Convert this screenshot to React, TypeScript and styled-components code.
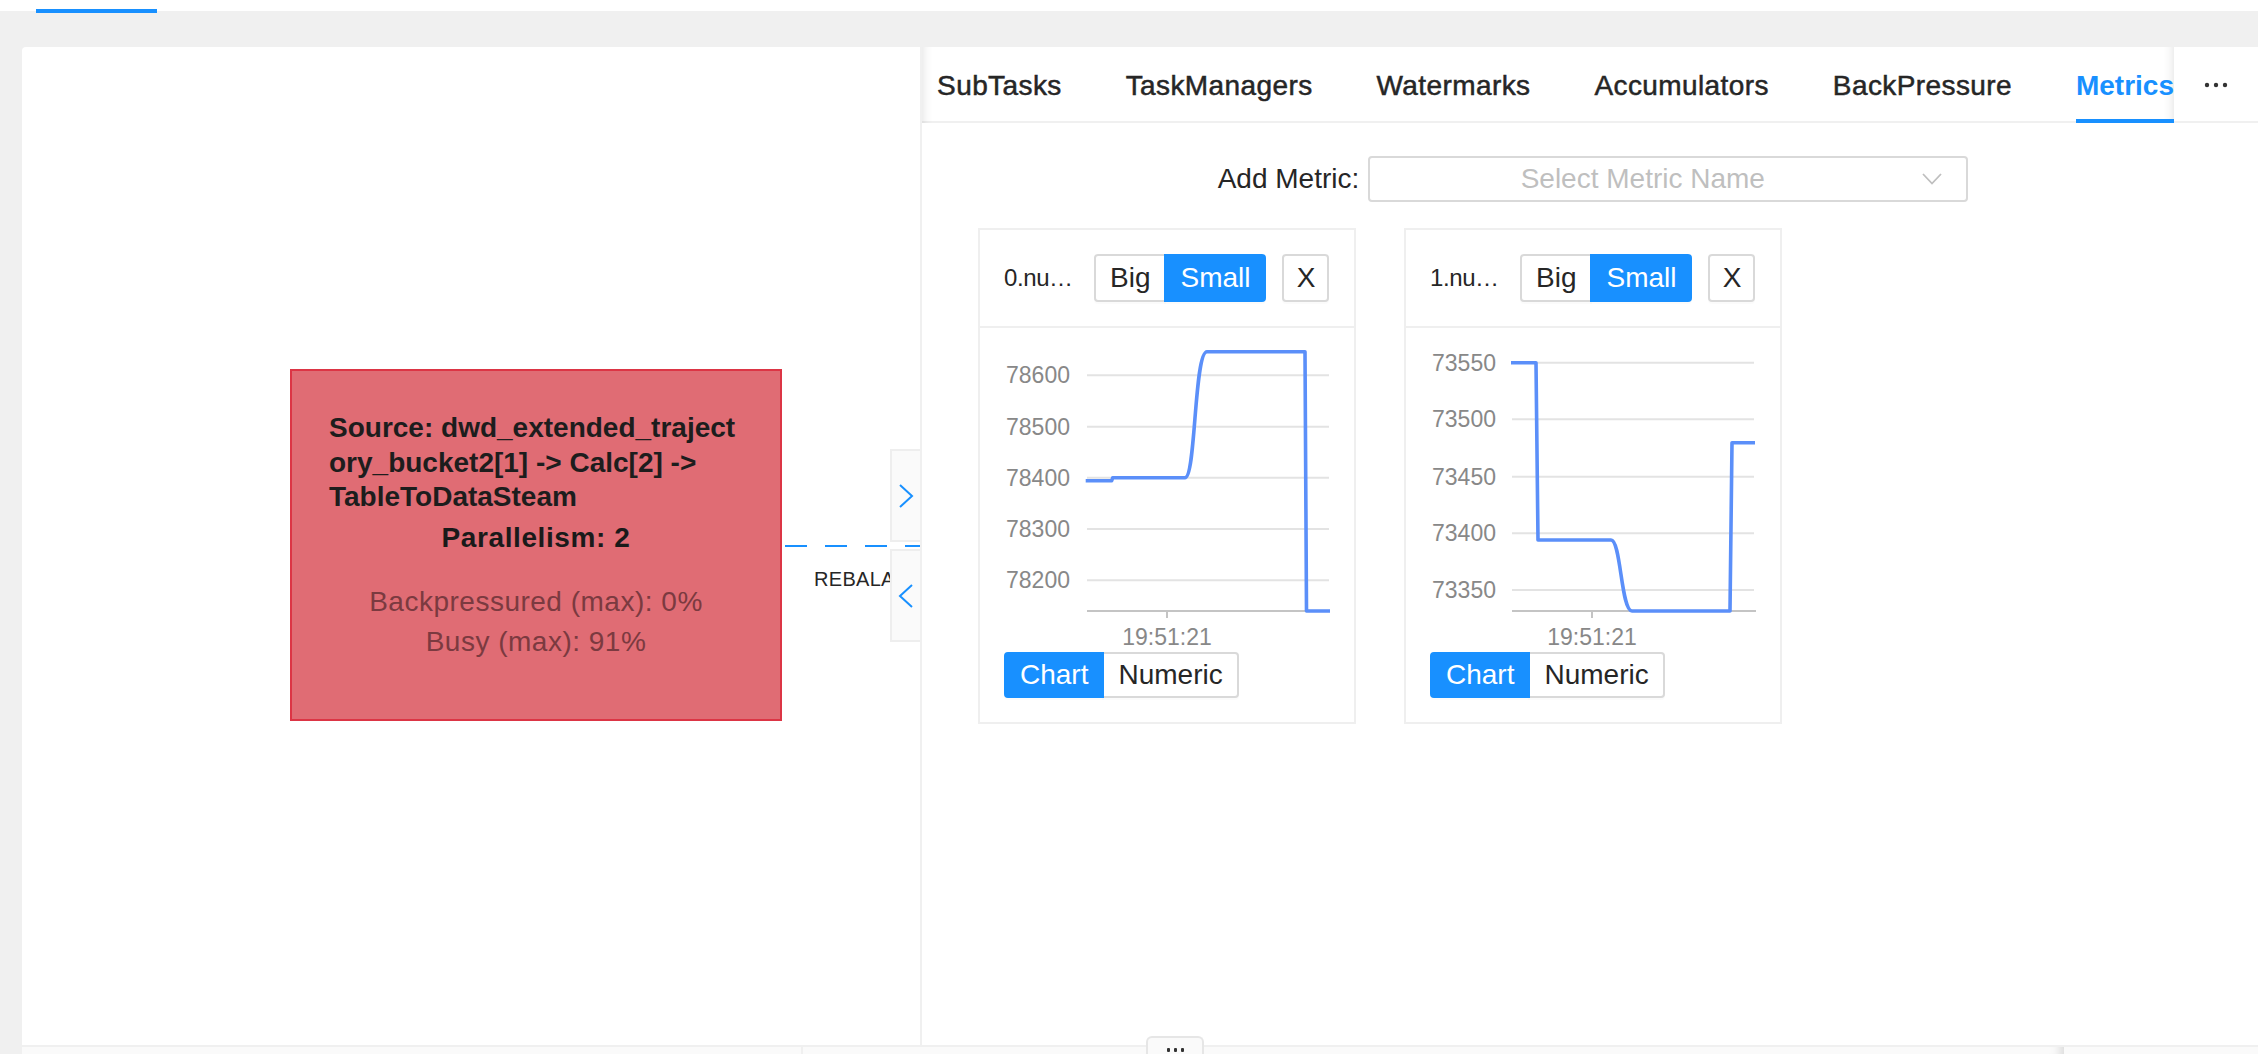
import React from "react";
import styled, { createGlobalStyle } from "styled-components";

const GlobalStyle = createGlobalStyle`
  html, body { margin: 0; padding: 0; height: 100%; overflow: hidden; background: #f0f0f0; }
  body { font-family: "Liberation Sans", Arial, Helvetica, sans-serif; color: #262626; }
  #root { height: 100%; }
  * { box-sizing: border-box; }
`;

const Page = styled.div`
  height: 100vh;
  display: flex;
  flex-direction: column;
  overflow: hidden;
`;

const TopStrip = styled.div`
  height: 11px;
  flex-shrink: 0;
  background: #fff;
  display: flex;
  padding-left: 36px;
  position: relative;
  z-index: 1;
`;

const TopInk = styled.div`
  width: 121px;
  height: 4px;
  margin-top: 9px;
  background: #1890ff;
`;

const Workspace = styled.div`
  flex: 1;
  min-height: 0;
  display: flex;
  flex-direction: column;
  padding: 36px 0 0 22px;
`;

const Card = styled.div`
  height: 998px;
  flex-shrink: 0;
  background: #fff;
  border-radius: 4px 0 0 0;
  display: flex;
  overflow: hidden;
`;

/* ---------- Left: job graph ---------- */

const GraphPanel = styled.div`
  width: 898px;
  flex-shrink: 0;
  position: relative;
  overflow: hidden;
`;

const Node = styled.div<{ $x: number; $y: number }>`
  position: absolute;
  left: ${(p) => p.$x}px;
  top: ${(p) => p.$y}px;
  width: 492px;
  height: 352px;
  background: #e06c74;
  border: 2px solid #dc3545;
  padding-top: 40px;
  display: flex;
  flex-direction: column;
`;

const NodeName = styled.div`
  display: flex;
  flex-direction: column;
  align-items: flex-start;
  padding-left: 37px;
  font-size: 28px;
  font-weight: 700;
  line-height: 34.5px;
  color: #1d1d1d;
  white-space: nowrap;
`;

const Parallelism = styled.div`
  margin-top: 6px;
  text-align: center;
  font-size: 28px;
  font-weight: 700;
  letter-spacing: 0.6px;
  line-height: 34px;
  color: #1a1a1a;
`;

const NodeStat = styled.div<{ $first?: boolean }>`
  margin-top: ${(p) => (p.$first ? 27 : 0)}px;
  text-align: center;
  font-size: 28px;
  line-height: 40px;
  letter-spacing: 0.5px;
  color: #7b3a40;
`;

const EdgeSvg = styled.svg`
  position: absolute;
  left: 760px;
  top: 493px;
`;

const EdgeLabel = styled.div`
  position: absolute;
  left: 792px;
  top: 520px;
  font-size: 20px;
  line-height: 24px;
  letter-spacing: 0.3px;
  color: #262626;
  white-space: nowrap;
`;

const ToggleStack = styled.div`
  position: absolute;
  right: 0;
  top: 402px;
  display: flex;
  flex-direction: column;
  gap: 7px;
  z-index: 2;
`;

const ToggleButton = styled.div`
  width: 30px;
  height: 93px;
  background: #fafafa;
  border: 2px solid #eeeeee;
  border-right: none;
  display: flex;
  align-items: center;
  justify-content: center;
`;

/* ---------- Right: tabs + metrics ---------- */

const DetailPanel = styled.div`
  flex: 1;
  min-width: 0;
  border-left: 2px solid #f0f0f0;
  display: flex;
  flex-direction: column;
`;

const TabBar = styled.div`
  height: 76px;
  flex-shrink: 0;
  display: flex;
  box-shadow: inset 0 -2px 0 #f0f0f0;
`;

const TabList = styled.div`
  flex: 1;
  min-width: 0;
  display: flex;
  justify-content: flex-end;
  gap: 64px;
  overflow: hidden;
  box-shadow: inset 12px 0 10px -10px rgba(0, 0, 0, 0.1),
    inset -12px 0 10px -10px rgba(0, 0, 0, 0.1);
`;

const Tab = styled.div<{ $active?: boolean }>`
  flex-shrink: 0;
  height: 76px;
  padding-top: 6px;
  display: flex;
  align-items: center;
  white-space: nowrap;
  font-size: 28px;
  font-weight: ${(p) => (p.$active ? 700 : 400)};
  letter-spacing: ${(p) => (p.$active ? "0" : "0.4px")};
  -webkit-text-stroke: ${(p) => (p.$active ? "0" : "0.5px")} currentColor;
  color: ${(p) => (p.$active ? "#1890ff" : "#262626")};
  border-bottom: 4px solid ${(p) => (p.$active ? "#1890ff" : "transparent")};
`;

const MoreTab = styled.div`
  width: 84px;
  flex-shrink: 0;
  display: flex;
  align-items: center;
  justify-content: center;
`;

const MetricRow = styled.div`
  margin-top: 33px;
  display: flex;
  justify-content: center;
  align-items: center;
  gap: 9px;
  padding-left: 6px;
`;

const FieldLabel = styled.span`
  font-size: 28px;
  color: #262626;
`;

const Select = styled.div`
  width: 600px;
  height: 46px;
  border: 2px solid #d9d9d9;
  border-radius: 4px;
  display: flex;
  align-items: center;
  padding: 0 22px;
`;

const Placeholder = styled.span`
  flex: 1;
  text-align: center;
  font-size: 28px;
  color: #bfbfbf;
  white-space: nowrap;
`;

const ArrowBox = styled.span`
  width: 51px;
  display: flex;
  justify-content: flex-end;
  padding-right: 2px;
`;

const CardRow = styled.div`
  margin-top: 26px;
  padding-left: 56px;
  display: flex;
  gap: 48px;
`;

const MetricCard = styled.div`
  width: 378px;
  border: 2px solid #efefef;
  display: flex;
  flex-direction: column;
`;

const CardHead = styled.div`
  height: 98px;
  border-bottom: 2px solid #efefef;
  display: flex;
  align-items: center;
  padding: 0 24px;
`;

const CardTitle = styled.span`
  width: 66px;
  margin-right: 24px;
  font-size: 24px;
  letter-spacing: -0.4px;
  white-space: nowrap;
  color: #262626;
`;

const ButtonGroup = styled.div`
  display: flex;
`;

const SegButton = styled.div<{ $active?: boolean; $pos: "first" | "last"; $h: number }>`
  height: ${(p) => p.$h}px;
  padding: 0 14px;
  display: flex;
  align-items: center;
  font-size: 28px;
  white-space: nowrap;
  color: ${(p) => (p.$active ? "#fff" : "#262626")};
  background: ${(p) => (p.$active ? "#1890ff" : "#fff")};
  border: 2px solid ${(p) => (p.$active ? "#1890ff" : "#d9d9d9")};
  border-radius: ${(p) => (p.$pos === "first" ? "4px 0 0 4px" : "0 4px 4px 0")};
  margin-left: ${(p) => (p.$pos === "last" ? "-2px" : "0")};
  position: relative;
  z-index: ${(p) => (p.$active ? 1 : 0)};
  box-shadow: 0 2px 0 rgba(0, 0, 0, 0.016);
`;

const CloseButton = styled.div`
  margin-left: 16px;
  width: 47px;
  height: 48px;
  border: 2px solid #d9d9d9;
  border-radius: 4px;
  display: flex;
  align-items: center;
  justify-content: center;
  font-size: 28px;
  color: #262626;
  box-shadow: 0 2px 0 rgba(0, 0, 0, 0.016);
`;

const CardBody = styled.div`
  padding: 12px 24px 24px;
  display: flex;
  flex-direction: column;
`;

const ChartSvg = styled.svg`
  display: block;
  font-family: "Liberation Sans", Arial, sans-serif;
`;

const ViewToggle = styled.div`
  margin-top: 4px;
  display: flex;
`;

/* ---------- Bottom ---------- */

const BottomBar = styled.div`
  flex: 1;
  position: relative;
  z-index: 3;
  background: #fafafa;
  border-top: 2px solid #f0f0f0;
  display: flex;
`;

const BottomCell = styled.div<{ $w?: number; $shadow?: boolean; $divider?: boolean }>`
  ${(p) => (p.$w ? `width: ${p.$w}px; flex-shrink: 0;` : "flex: 1;")}
  border-right: ${(p) => (p.$divider ? "2px solid #f0f0f0" : "none")};
  box-shadow: ${(p) => (p.$shadow ? "inset -12px 0 10px -8px rgba(0,0,0,0.12)" : "none")};
`;

const DragHandle = styled.div`
  position: absolute;
  left: 1124px;
  top: -11px;
  width: 58px;
  height: 30px;
  background: #fafafa;
  border: 2px solid #e6e6e6;
  border-bottom: none;
  border-radius: 6px 6px 0 0;
  display: flex;
  justify-content: center;
  gap: 4px;
  padding-top: 10px;
`;

const HandleDot = styled.span`
  width: 3px;
  height: 4px;
  border-radius: 1px;
  background: #333;
`;

/* ---------- Data ---------- */

type Tick = { label: string; y: number };
type ChartSpec = {
  title: string;
  ticks: Tick[];
  gridX1: number;
  gridX2: number;
  tickX: number;
  path: string;
};

const charts: ChartSpec[] = [
  {
    title: "0.nu\u2026",
    ticks: [
      { label: "78600", y: 35.3 },
      { label: "78500", y: 86.7 },
      { label: "78400", y: 137.7 },
      { label: "78300", y: 189 },
      { label: "78200", y: 240.3 },
    ],
    gridX1: 83,
    gridX2: 325,
    tickX: 163,
    path: "M81.7 140.7 L107.7 140.7 L108.7 137.7 L181 137.7 C192 137.7 190 11.7 203 11.7 L301 11.7 L302.5 271 L326 271",
  },
  {
    title: "1.nu\u2026",
    ticks: [
      { label: "73550", y: 22.7 },
      { label: "73500", y: 79.3 },
      { label: "73450", y: 136.7 },
      { label: "73400", y: 193.3 },
      { label: "73350", y: 250 },
    ],
    gridX1: 82,
    gridX2: 324,
    tickX: 162,
    path: "M81 22.7 L106 22.7 L108 200 L181 200 C191 200 191 271 202 271 L300 271 L302 102.7 L325 102.7",
  },
];

const tabs = ["SubTasks", "TaskManagers", "Watermarks", "Accumulators", "BackPressure", "Metrics"];

function Chevron({ dir }: { dir: "left" | "right" }) {
  const pts = dir === "right" ? "2,1 14,12 2,23" : "14,1 2,12 14,23";
  return (
    <svg width="16" height="24" viewBox="0 0 16 24">
      <polyline points={pts} fill="none" stroke="#1890ff" strokeWidth="2" />
    </svg>
  );
}

function MetricChart({ spec }: { spec: ChartSpec }) {
  const axisY = 271;
  return (
    <ChartSvg width={326} height={308} viewBox="0 0 326 308">
      {spec.ticks.map((t) => (
        <g key={t.label}>
          <line x1={spec.gridX1} x2={spec.gridX2} y1={t.y} y2={t.y} stroke="#e3e3e3" strokeWidth="2" />
          <text x={66} y={t.y + 8} textAnchor="end" fontSize="23" fill="#888888">
            {t.label}
          </text>
        </g>
      ))}
      <line x1={spec.gridX1} x2={spec.gridX2 + 2} y1={axisY} y2={axisY} stroke="#c4c4c4" strokeWidth="2" />
      <line x1={spec.tickX} x2={spec.tickX} y1={axisY} y2={axisY + 7} stroke="#c4c4c4" strokeWidth="2" />
      <text x={spec.tickX} y={305} textAnchor="middle" fontSize="23" fill="#888888">
        19:51:21
      </text>
      <path d={spec.path} fill="none" stroke="#5b8ff9" strokeWidth="3.6" strokeLinejoin="round" />
    </ChartSvg>
  );
}

function MetricPanel({ spec }: { spec: ChartSpec }) {
  return (
    <MetricCard>
      <CardHead>
        <CardTitle>{spec.title}</CardTitle>
        <ButtonGroup>
          <SegButton $pos="first" $h={48}>Big</SegButton>
          <SegButton $pos="last" $h={48} $active>
            Small
          </SegButton>
        </ButtonGroup>
        <CloseButton>X</CloseButton>
      </CardHead>
      <CardBody>
        <MetricChart spec={spec} />
        <ViewToggle>
          <SegButton $pos="first" $h={46} $active>
            Chart
          </SegButton>
          <SegButton $pos="last" $h={46}>Numeric</SegButton>
        </ViewToggle>
      </CardBody>
    </MetricCard>
  );
}

export default function App() {
  return (
    <>
      <GlobalStyle />
      <Page>
        <TopStrip>
          <TopInk />
        </TopStrip>
        <Workspace>
          <Card>
            <GraphPanel>
              <Node $x={268} $y={322}>
                <NodeName>
                  <span>Source: dwd_extended_traject</span>
                  <span>ory_bucket2[1] -&gt; Calc[2] -&gt;</span>
                  <span>TableToDataSteam</span>
                </NodeName>
                <Parallelism>Parallelism: 2</Parallelism>
                <NodeStat $first>Backpressured (max): 0%</NodeStat>
                <NodeStat>Busy (max): 91%</NodeStat>
              </Node>
              <EdgeSvg width="140" height="12" viewBox="0 0 140 12">
                <line x1="3" x2="140" y1="6" y2="6" stroke="#1890ff" strokeWidth="2" strokeDasharray="22 18" />
              </EdgeSvg>
              <EdgeLabel>REBALANCE</EdgeLabel>
              <ToggleStack>
                <ToggleButton>
                  <Chevron dir="right" />
                </ToggleButton>
                <ToggleButton>
                  <Chevron dir="left" />
                </ToggleButton>
              </ToggleStack>
            </GraphPanel>
            <DetailPanel>
              <TabBar>
                <TabList>
                  {tabs.map((t) => (
                    <Tab key={t} $active={t === "Metrics"}>
                      {t}
                    </Tab>
                  ))}
                </TabList>
                <MoreTab>
                  <svg width="24" height="6" viewBox="0 0 24 6">
                    <circle cx="3" cy="3" r="2.2" fill="#333" />
                    <circle cx="12" cy="3" r="2.2" fill="#333" />
                    <circle cx="21" cy="3" r="2.2" fill="#333" />
                  </svg>
                </MoreTab>
              </TabBar>
              <MetricRow>
                <FieldLabel>Add Metric:</FieldLabel>
                <Select>
                  <Placeholder>Select Metric Name</Placeholder>
                  <ArrowBox>
                    <svg width="20" height="12" viewBox="0 0 20 12">
                      <polyline points="1,1 10,10.5 19,1" fill="none" stroke="#bfbfbf" strokeWidth="1.8" />
                    </svg>
                  </ArrowBox>
                </Select>
              </MetricRow>
              <CardRow>
                {charts.map((c) => (
                  <MetricPanel key={c.title} spec={c} />
                ))}
              </CardRow>
            </DetailPanel>
          </Card>
          <BottomBar>
            <BottomCell $w={781} $divider />
            <BottomCell $w={1261} $shadow />
            <BottomCell />
            <DragHandle>
              <HandleDot />
              <HandleDot />
              <HandleDot />
            </DragHandle>
          </BottomBar>
        </Workspace>
      </Page>
    </>
  );
}
